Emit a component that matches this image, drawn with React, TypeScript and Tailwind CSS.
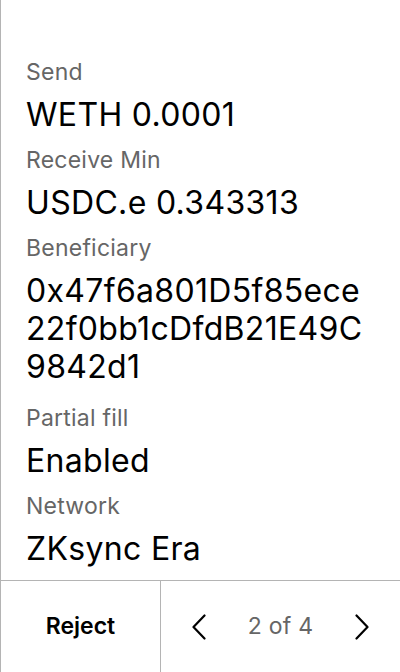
import React from 'react';

interface FieldProps {
  label: string;
  value: string;
  multiline?: boolean;
}

const fields: FieldProps[] = [
  { label: 'Send', value: 'WETH 0.0001' },
  { label: 'Receive Min', value: 'USDC.e 0.343313' },
  { label: 'Beneficiary', value: '0x47f6a801D5f85ece22f0bb1cDfdB21E49C9842d1', multiline: true },
  { label: 'Partial fill', value: 'Enabled' },
  { label: 'Network', value: 'ZKsync Era' },
];

function Field({ label, value, multiline }: FieldProps) {
  return (
    <div className={multiline ? 'pb-[5px]' : ''}>
      <p className="text-[23px] leading-[28px] tracking-[0.01em] text-[#666666]">{label}</p>
      <p
        className={
          multiline
            ? 'mt-[10px] break-all pr-[25px] text-[32px] leading-[38px] tracking-[0.01em] text-black'
            : 'mt-[10px] break-all pr-[25px] text-[32px] leading-[37px] tracking-[0.01em] text-black'
        }
      >
        {value}
      </p>
    </div>
  );
}

// chevrons for paging
function Chevron({ dir }: { dir: 'left' | 'right' }) {
  return (
    <svg width="14" height="26" viewBox="0 0 14 26" fill="none" stroke="black" strokeWidth="2.2" strokeLinecap="round" strokeLinejoin="round">
      {dir === 'left' ? <path d="M12.5 1.5 1.5 13l11 11.5" /> : <path d="M1.5 1.5 12.5 13l-11 11.5" />}
    </svg>
  );
}

export default function App() {
  return (
    <div
      className="flex h-[672px] w-[400px] flex-col border-l border-[#b4b4b4] bg-white"
      style={{ fontFamily: 'Inter, "Noto Sans", sans-serif' }}
    >
      <div className="flex flex-1 flex-col gap-[13px] pl-[25px] pt-[58px]">
        {fields.map((f) => (
          <Field key={f.label} label={f.label} value={f.value} multiline={f.multiline} />
        ))}
      </div>
      <div className="flex h-[92px] border-t border-[#b4b4b4]">
        <button className="flex w-[160px] items-center justify-center border-r border-[#b4b4b4] text-[23px] font-semibold text-black">
          Reject
        </button>
        <div className="flex flex-1 items-center justify-between pl-[31px] pr-[31px]">
          <button className="flex items-center">
            <Chevron dir="left" />
          </button>
          <span className="text-[23px] tracking-[0.01em] text-[#666666]">2 of 4</span>
          <button className="flex items-center">
            <Chevron dir="right" />
          </button>
        </div>
      </div>
    </div>
  );
}
